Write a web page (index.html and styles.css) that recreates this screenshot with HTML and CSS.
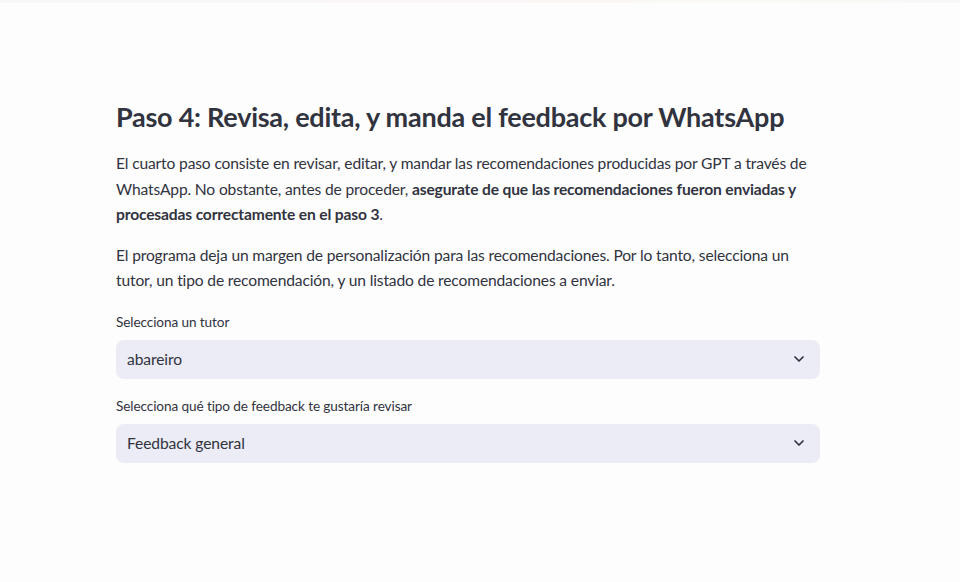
FILE: index.html
```html
<!DOCTYPE html>
<html lang="es">
<head>
<meta charset="utf-8">
<title>Paso 4</title>
<link rel="stylesheet" href="styles.css">
</head>
<body>
<div class="decoration"></div>
<main class="main">
  <h3 class="title">Paso 4: Revisa, edita, y manda el feedback por WhatsApp</h3>
  <p class="text">El cuarto paso consiste en revisar, editar, y mandar las recomendaciones producidas por GPT a través de WhatsApp. No obstante, antes de proceder, <strong>asegurate de que las recomendaciones fueron enviadas y procesadas correctamente en el paso 3</strong>.</p>
  <p class="text">El programa deja un margen de personalización para las recomendaciones. Por lo tanto, selecciona un tutor, un tipo de recomendación, y un listado de recomendaciones a enviar.</p>
  <div class="field">
    <label class="label">Selecciona un tutor</label>
    <div class="select">
      <span class="value">abareiro</span>
      <svg class="chevron" viewBox="0 0 24 24" width="16" height="16"><path d="M6 9l6 6 6-6" fill="none" stroke="#31333f" stroke-width="2.6" stroke-linecap="round" stroke-linejoin="round"/></svg>
    </div>
  </div>
  <div class="field">
    <label class="label">Selecciona qué tipo de feedback te gustaría revisar</label>
    <div class="select">
      <span class="value">Feedback general</span>
      <svg class="chevron" viewBox="0 0 24 24" width="16" height="16"><path d="M6 9l6 6 6-6" fill="none" stroke="#31333f" stroke-width="2.6" stroke-linecap="round" stroke-linejoin="round"/></svg>
    </div>
  </div>
</main>
</body>
</html>
```

FILE: styles.css
```css
html, body {
  margin: 0;
  padding: 0;
  background: #fdfdfd;
}
body {
  font-family: "Lato", "Noto Sans", sans-serif;
  color: #31333f;
  height: 582px;
  overflow: hidden;
}
.decoration {
  height: 3px;
  background: linear-gradient(90deg, #f8f8f8, #fbf6f6 50%, #fbfaf2 75%, #f8f8f8);
}
.main {
  width: 704px;
  padding: 97px 0 0 116px;
}
.title {
  margin: 0 0 17px;
  font-size: 27px;
  line-height: 34px;
  font-weight: 700;
  letter-spacing: -0.25px;
}
.text {
  margin: 0 0 15px;
  font-size: 15.6px;
  line-height: 25.6px;
  letter-spacing: -0.15px;
}
.text strong {
  font-weight: 700;
}
.field {
  margin-bottom: 16px;
}
.text + .field {
  padding-top: 2px;
}
.label {
  display: block;
  font-size: 13.6px;
  line-height: 22px;
  letter-spacing: -0.1px;
  margin-bottom: 7px;
}
.select {
  height: 39px;
  border-radius: 8px;
  background: #ebecf5;
  display: flex;
  align-items: center;
  justify-content: space-between;
  padding: 0 13px 0 11px;
  font-size: 15.6px;
  letter-spacing: -0.1px;
}
.chevron {
  flex: none;
}
```
